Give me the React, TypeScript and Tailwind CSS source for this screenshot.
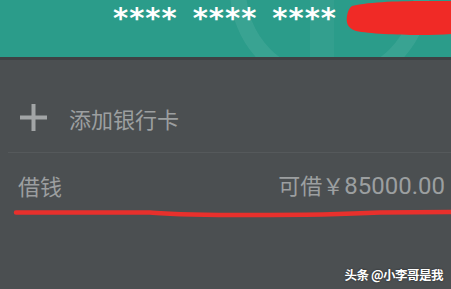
import React from "react"

const cjk = { fontFamily: '"Noto Sans CJK SC", "Noto Sans", sans-serif' }

const Stars: React.FC = () => (
  <div className="flex gap-[15px]">
    {[0, 1, 2].map(g => (
      <span key={g} className="text-[29px] leading-none font-bold text-white tracking-[1px]" style={{ fontFamily: '"DejaVu Sans", sans-serif' }}>
        ****
      </span>
    ))}
  </div>
)

export default function App() {
  return (
    <div className="w-[451px] h-[289px] overflow-hidden bg-[#4b4f51] flex flex-col relative" style={cjk}>
      {/* card strip */}
      <div className="h-[57px] bg-[#2b9c8a] relative overflow-hidden flex items-start pl-[113px] pt-[4px]">
        <svg className="absolute left-0 top-0" width="451" height="57">
          <circle cx="330" cy="-10" r="92" fill="none" stroke="#ffffff" strokeOpacity="0.07" strokeWidth="16" />
          <rect x="310" y="0" width="24" height="57" fill="#ffffff" fillOpacity="0.04" />
        </svg>
        <div className="relative">
          <Stars />
        </div>
        <svg className="absolute left-[346px] top-0" width="105" height="36">
          <path d="M6 6 C 30 0, 80 1, 105 1 L 105 34 C 80 36, 30 35, 10 31 C 1 28, 0 22, 1 16 C 2 11, 3 8, 6 6 Z" fill="#f02a26" />
        </svg>
      </div>
      <div className="h-[3px] bg-[#3e4244]" />

      {/* add card row */}
      <div className="h-[92px] flex items-center pl-[20px] pt-[23px]">
        <svg width="27" height="27" viewBox="0 0 27 27" className="shrink-0">
          <rect x="11.5" y="0" width="4" height="27" fill="#a2a5a6" />
          <rect x="0" y="11.5" width="27" height="4" fill="#a2a5a6" />
        </svg>
        <span className="ml-[22px] text-[22px] text-[#9c9fa0] leading-none">添加银行卡</span>
      </div>
      <div className="h-px bg-[#55595b] ml-[8px]" />

      {/* loan row */}
      <div className="h-[66px] flex items-center justify-between pl-[18px] pr-[6px] pb-[2px]">
        <span className="text-[22px] text-[#9c9fa0] leading-none">借钱</span>
        <span className="text-[22px] text-[#9c9fa0] leading-none flex items-baseline">
          可借￥<span className="text-[24px]" style={{ fontFamily: 'Roboto, sans-serif' }}>85000.00</span>
        </span>
      </div>
      <svg width="451" height="9" className="-mt-[10px] ml-0">
        <path d="M16 3.5 L 150 3.5 C 170 5, 180 6, 250 6 C 320 6, 350 5, 380 3.5 L 451 3" stroke="#e8302c" strokeWidth="4.5" fill="none" strokeLinecap="round" />
      </svg>

      {/* watermark */}
      <div className="absolute right-[8px] bottom-[8px] text-[12.5px] font-bold tracking-[-0.5px] text-white leading-none" style={{ textShadow: "0 0 2px rgba(0,0,0,0.6)" }}>
        头条 @小李哥是我
      </div>
    </div>
  )
}
